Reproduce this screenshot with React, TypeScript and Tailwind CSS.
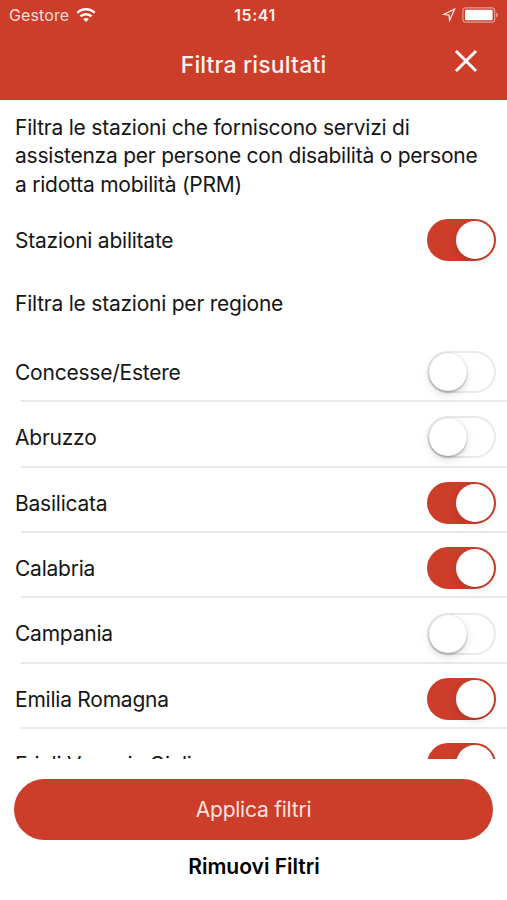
import { useState } from "react";
import clsx from "clsx";

/* =========================
   Data
========================= */

const initialRegions = [
  { name: "Concesse/Estere", enabled: false },
  { name: "Abruzzo", enabled: false },
  { name: "Basilicata", enabled: true },
  { name: "Calabria", enabled: true },
  { name: "Campania", enabled: false },
  { name: "Emilia Romagna", enabled: true },
  { name: "Friuli Venezia Giulia", enabled: true },
];

/* =========================
   Icons
========================= */

const WifiIcon = () => (
  <svg className="ml-[7px] h-[15px] w-[20px]" viewBox="0 0 20 15" fill="none" stroke="white" strokeWidth={2.5}>
    <path d="M1.3 4.9C6.1 0.1 13.9 0.1 18.7 4.9" />
    <path d="M4.5 8.3C7.5 5.4 12.5 5.4 15.5 8.3" />
    <path d="M10 13.9L7.1 11C8.7 9.5 11.3 9.5 12.9 11Z" fill="white" stroke="none" />
  </svg>
);

const LocationIcon = () => (
  <svg className="h-[14px] w-[14px]" viewBox="0 0 14 14" fill="none" stroke="#ffe3de" strokeWidth={1.3}>
    <path d="M12.6 1.2L1.6 6.4L7 7.1L7.6 12.4Z" />
  </svg>
);

const BatteryIcon = () => (
  <svg className="ml-[6px] h-[16px] w-[37px]" viewBox="0 0 37 16" fill="none">
    <rect x="0.9" y="0.8" width="31.8" height="14.4" rx="3" stroke="white" strokeOpacity="0.5" strokeWidth="1.2" />
    <rect x="3" y="2.8" width="27.6" height="10.4" rx="1.2" fill="white" />
    <path d="M34.2 5.5C36.4 6.4 36.4 9.6 34.2 10.5Z" fill="white" fillOpacity="0.55" />
  </svg>
);

const CloseIcon = () => (
  <svg className="h-[24px] w-[24px]" viewBox="0 0 24 24" fill="none" stroke="white" strokeWidth={3}>
    <path d="M2 2L22 22M22 2L2 22" />
  </svg>
);

/* =========================
   Toggle
========================= */

type ToggleProps = {
  label: string;
  checked: boolean;
  onChange: () => void;
};

const Toggle = ({ label, checked, onChange }: ToggleProps) => (
  <button
    role="switch"
    aria-label={label}
    aria-checked={checked}
    onClick={onChange}
    className={clsx(
      "flex h-[42px] w-[69px] shrink-0 items-center rounded-full border-2",
      checked ? "justify-end border-[#cc3d2a] bg-[#cc3d2a]" : "justify-start border-[#e9e9e9] bg-white"
    )}
  >
    <span
      className={clsx(
        "h-[38px] w-[38px] rounded-full bg-white",
        checked
          ? "shadow-[0_3px_8px_rgba(0,0,0,0.12)]"
          : "shadow-[0_0_1px_rgba(0,0,0,0.25),0_2px_2px_rgba(0,0,0,0.2),0_4px_10px_rgba(0,0,0,0.12)]"
      )}
    />
  </button>
);

const App = () => {
  const [stationsEnabled, setStationsEnabled] = useState(true);
  const [regions, setRegions] = useState(initialRegions);

  const toggleRegion = (name: string) => {
    setRegions(regions.map((r) => (r.name === name ? { ...r, enabled: !r.enabled } : r)));
  };

  return (
    <div className="flex h-[900px] w-[507px] flex-col overflow-hidden bg-white font-['Inter','Liberation_Sans',sans-serif] text-[21px] tracking-[-0.23px] text-[#161616]">
      {/* ================= HEADER ================= */}
      <header className="h-[100px] shrink-0 bg-[#cc3d2a] text-white">
        <div className="grid h-[30px] grid-cols-[1fr_auto_1fr] items-center pr-[8px] pl-[9px]">
          <div className="flex items-center text-[#ffdcd6]">
            <span className="text-[16px] tracking-[0.1px]">Gestore</span>
            <WifiIcon />
          </div>
          <span className="pl-[2px] text-[16px] font-semibold tracking-[0.5px] text-[#fff0ed]">15:41</span>
          <div className="flex items-center justify-end">
            <LocationIcon />
            <BatteryIcon />
          </div>
        </div>
        <div className="grid h-[70px] grid-cols-[1fr_auto_1fr] items-center pr-[29px] pl-[29px]">
          <span />
          <h1 className="text-[23px] font-medium tracking-[0.15px] text-[#fff0ed]">Filtra risultati</h1>
          <button aria-label="Chiudi" className="mb-[8px] justify-self-end">
            <CloseIcon />
          </button>
        </div>
      </header>

      {/* ================= FILTERS ================= */}
      <main className="h-[659px] shrink-0 overflow-hidden">
        <p className="pt-[14px] pl-[15px] leading-[28.3px] whitespace-nowrap">
          Filtra le stazioni che forniscono servizi di
          <br />
          assistenza per persone con disabilità o persone
          <br />a ridotta mobilità (PRM)
        </p>
        <div className="mt-[20px] flex h-[42px] items-center justify-between pr-[11px] pl-[15px]">
          <span className="pt-[2px]">Stazioni abilitate</span>
          <Toggle
            label="Stazioni abilitate"
            checked={stationsEnabled}
            onChange={() => setStationsEnabled(!stationsEnabled)}
          />
        </div>
        <h2 className="mt-[29px] pl-[15px] leading-[28px]">Filtra le stazioni per regione</h2>
        <ul className="mt-[19px]">
          {regions.map((region) => (
            <li key={region.name} className="flex h-[65.4px] flex-col">
              <div className="flex flex-1 items-center justify-between pt-[7px] pr-[11px] pl-[15px]">
                <span className="pt-px">{region.name}</span>
                <Toggle label={region.name} checked={region.enabled} onChange={() => toggleRegion(region.name)} />
              </div>
              <div className="ml-[21px] h-[2px] shrink-0 bg-[#e9e9ea]" />
            </li>
          ))}
        </ul>
      </main>

      {/* ================= ACTIONS ================= */}
      <footer className="flex flex-col items-center pt-[20px]">
        <button className="h-[61px] w-[479px] rounded-full bg-[#cc3d2a] pt-px text-[#ffe3de]">Applica filtri</button>
        <button className="mt-[13px] pl-px leading-[28px] font-semibold tracking-normal text-black">
          Rimuovi Filtri
        </button>
      </footer>
    </div>
  );
};

export default App;
